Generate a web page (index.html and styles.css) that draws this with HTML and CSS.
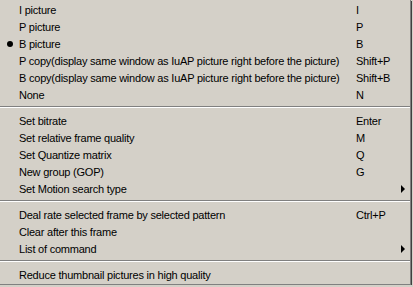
FILE: index.html
```html
<!DOCTYPE html>
<html>
<head>
<meta charset="utf-8">
<link rel="stylesheet" href="styles.css">
</head>
<body>
<div class="menu">
  <div class="item"><span class="check"></span><span class="label">I picture</span><span class="key">I</span></div>
  <div class="item"><span class="check"></span><span class="label">P picture</span><span class="key">P</span></div>
  <div class="item"><span class="check"><i class="bullet"></i></span><span class="label">B picture</span><span class="key">B</span></div>
  <div class="item"><span class="check"></span><span class="label">P copy(display same window as IuAP picture right before the picture)</span><span class="key">Shift+P</span></div>
  <div class="item"><span class="check"></span><span class="label">B copy(display same window as IuAP picture right before the picture)</span><span class="key">Shift+B</span></div>
  <div class="item"><span class="check"></span><span class="label">None</span><span class="key">N</span></div>
  <div class="sep"></div>
  <div class="item"><span class="check"></span><span class="label">Set bitrate</span><span class="key">Enter</span></div>
  <div class="item"><span class="check"></span><span class="label">Set relative frame quality</span><span class="key">M</span></div>
  <div class="item"><span class="check"></span><span class="label">Set Quantize matrix</span><span class="key">Q</span></div>
  <div class="item"><span class="check"></span><span class="label">New group (GOP)</span><span class="key">G</span></div>
  <div class="item"><span class="check"></span><span class="label">Set Motion search type</span><span class="key sub"><i class="arrow"></i></span></div>
  <div class="sep"></div>
  <div class="item"><span class="check"></span><span class="label">Deal rate selected frame by selected pattern</span><span class="key">Ctrl+P</span></div>
  <div class="item"><span class="check"></span><span class="label">Clear after this frame</span><span class="key"></span></div>
  <div class="item"><span class="check"></span><span class="label">List of command</span><span class="key sub"><i class="arrow"></i></span></div>
  <div class="sep"></div>
  <div class="item"><span class="check"></span><span class="label">Reduce thumbnail pictures in high quality</span><span class="key"></span></div>
</div>
</body>
</html>
```

FILE: styles.css
```css
html, body {
  margin: 0;
  padding: 0;
  background: #d4d0c8;
}
.menu {
  width: 411px;
  height: 285px;
  box-sizing: border-box;
  padding-top: 1px;
  background: #d4d0c8;
  border-right: 1px solid #808080;
  border-bottom: 1px solid #808080;
  box-shadow: 1px 1px 0 #404040;
  font-family: "Liberation Sans", Arial, sans-serif;
  font-size: 11px;
  letter-spacing: -0.22px;
  color: #000;
}
.item {
  display: grid;
  grid-template-columns: 19px 1fr 54px;
  height: 17px;
  align-items: center;
  white-space: nowrap;
  padding-top: 1px;
  box-sizing: border-box;
}
.check {
  display: flex;
  align-items: center;
  padding-left: 7px;
}
.bullet {
  display: block;
  width: 6px;
  height: 6px;
  border-radius: 50%;
  background: #000;
}
.key.sub {
  display: flex;
  justify-content: flex-end;
  padding-right: 5px;
}
.arrow {
  display: block;
  width: 0;
  height: 0;
  border-top: 4px solid transparent;
  border-bottom: 4px solid transparent;
  border-left: 4px solid #000;
}
.sep {
  height: 9px;
  box-sizing: border-box;
  padding-top: 3px;
}
.sep::before {
  content: "";
  display: block;
  height: 1px;
  background: #808080;
  border-bottom: 1px solid #fff;
}
```
